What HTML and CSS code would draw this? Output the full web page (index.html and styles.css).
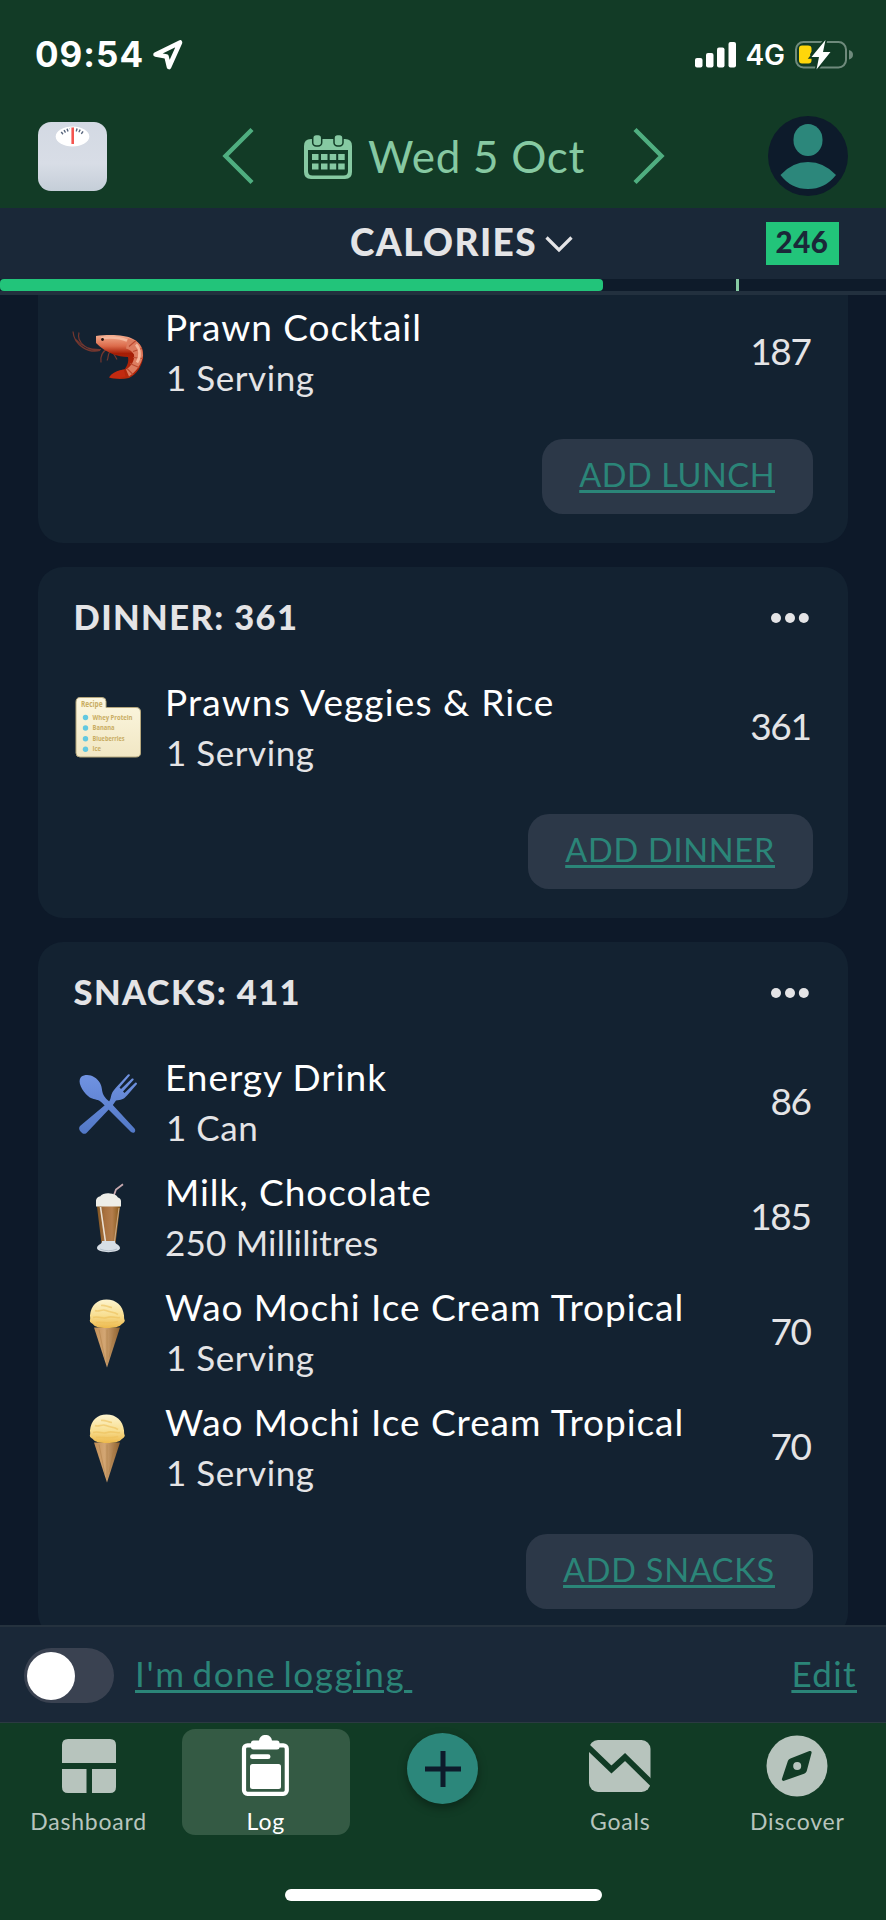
FILE: index.html
```html
<!DOCTYPE html>
<html lang="en">
<head>
<meta charset="utf-8">
<title>Food log</title>
<link rel="stylesheet" href="styles.css">
</head>
<body>
<svg width="0" height="0" class="defs" aria-hidden="true">
  <defs>
    <linearGradient id="scaleBody" x1="0" y1="0" x2="0" y2="1"><stop offset="0" stop-color="#d3d9e3"/><stop offset=".6" stop-color="#d8dde6"/><stop offset="1" stop-color="#c5ced8"/></linearGradient>
    <linearGradient id="paper" x1="0" y1="0" x2="0" y2="1"><stop offset="0" stop-color="#fcf7e0"/><stop offset="1" stop-color="#f1e7c4"/></linearGradient>
    <linearGradient id="steel" gradientUnits="userSpaceOnUse" x1="0" y1="8" x2="0" y2="68"><stop offset="0" stop-color="#7193e2"/><stop offset="1" stop-color="#5278c6"/></linearGradient>
    <linearGradient id="choc" x1="0" y1="0" x2="1" y2="0"><stop offset="0" stop-color="#7d5320"/><stop offset=".35" stop-color="#a9713f"/><stop offset=".65" stop-color="#b47e4c"/><stop offset="1" stop-color="#815414"/></linearGradient>
    <linearGradient id="wafer" x1="0" y1="0" x2="1" y2="0"><stop offset="0" stop-color="#c39058"/><stop offset=".4" stop-color="#d3a673"/><stop offset="1" stop-color="#8e6130"/></linearGradient>
    <linearGradient id="scoop" x1="0" y1="0" x2="0" y2="1"><stop offset="0" stop-color="#fdf4cf"/><stop offset=".55" stop-color="#f8df92"/><stop offset="1" stop-color="#edb94c"/></linearGradient>
    <linearGradient id="shell" x1="0" y1="0" x2="0" y2="1"><stop offset="0" stop-color="#f3ad8f"/><stop offset=".25" stop-color="#dc6b4b"/><stop offset=".42" stop-color="#a51e06"/><stop offset="1" stop-color="#b52a0c"/></linearGradient>
    <symbol id="cone" viewBox="1 -1.500 72 72">
      <path d="M23 30 49 30 36 70Z" fill="url(#wafer)"/>
      <path d="M28 32l6 30M36 32v34M44 32l-6 28" stroke="#a87841" stroke-width=".7" opacity=".6"/>
      <path d="M19 18C20 8 26 2 35.500 2S52 8 53 18c.2 1.600-.2 3 .8 5-.2 2-2 3-3 3.500-2 3-8 4-15 4s-12-1-14-4c-1.500-.8-3-1.800-3-3.500.8-2 .200-3 .200-5Z" fill="url(#scoop)"/>
      <path d="M24 13c4 2 7-2 11 0s8 1 12 4M22 20c6-2 9 2 14 0s9 1 13 0M25 25c6-1 11 2 22-1M30 8c4-1 7 2 11 2" fill="none" stroke="#edc05a" stroke-width="1.600" opacity=".6"/>
    </symbol>
  </defs>
</svg>
<div class="app">
  <header class="header">
    <div class="status">
      <span class="clock">09:54</span>
      <svg class="locate" width="32" height="32" viewBox="0 0 32 32"><path d="M3.500 15.500 28 3.500 17 28 14.500 17.500Z" fill="none" stroke="#fff" stroke-width="4.600" stroke-linejoin="round"/></svg>
      <svg class="signal" width="42" height="26" viewBox="0 0 42 26" fill="#fff"><rect x="0" y="16" width="7.500" height="9.500" rx="2"/><rect x="11" y="11" width="7.500" height="14.500" rx="2"/><rect x="22" y="5.500" width="7.500" height="20" rx="2"/><rect x="33.500" y="0" width="7.500" height="25.500" rx="2"/></svg>
      <span class="network">4G</span>
      <svg class="battery" width="60" height="30" viewBox="0 0 60 30">
        <rect x="2" y="2" width="50" height="25.500" rx="7.500" fill="none" stroke="#6f8a7c" stroke-width="2"/>
        <path d="M55 10q4 1 4 4.700t-4 4.700Z" fill="#6f8a7c"/>
        <path d="M8 5.500h6q3.500 0 3.500 3v3l-1.500 3 1.500 3v3q0 3-3 3H8q-3 0-3-3V8.500q0-3 3-3Z" fill="#ffd60a"/>
        <path d="M31.500 0 17.500 17H25L22.500 29.500 36.500 12H29Z" fill="#fff" stroke="#123b26" stroke-width="3.500" paint-order="stroke"/>
      </svg>
    </div>
    <div class="toolbar">
      <svg class="scale" width="69" height="69" viewBox="0 0 69 69">
        <rect width="69" height="69" rx="13" fill="url(#scaleBody)"/>
        <ellipse cx="34.500" cy="14.500" rx="16.800" ry="10" fill="#fff"/>
        <path d="M23.500 11.500Q34.500 3 45.500 11.500" fill="none" stroke="#57657c" stroke-width="3" stroke-dasharray="1.400 1.700"/>
        <path d="M34.500 5.500V22" stroke="#fff" stroke-width="5"/>
        <path d="M34.700 5.500V22" stroke="#f4544f" stroke-width="2.600"/>
      </svg>
      <div class="datenav">
        <svg width="32" height="58" viewBox="0 0 32 58"><path d="M30 2.500 3.500 29 30 55.500" fill="none" stroke="#4fae80" stroke-width="4.400"/></svg>
        <div class="date">
          <svg width="48" height="46" viewBox="0 0 48 46">
            <path d="M7 5h34q7 0 7 7v26q0 7-7 7H7q-7 0-7-7V12q0-7 7-7ZM4 16v21q0 4.500 4.500 4.500h31q4.500 0 4.500-4.500V16Z" fill="#86c9a2" fill-rule="evenodd"/>
            <g fill="#86c9a2" stroke="#123b26" stroke-width="1.500"><rect x="8.700" y=".5" width="9" height="11.500" rx="3.500"/><rect x="30" y=".5" width="9" height="11.500" rx="3.500"/></g>
            <path d="M8 20h6.500v6H8zM17 20h6.500v6H17zM25.700 20h6.500v6h-6.500zM34.200 20h6.500v6h-6.500zM8 29.500h6.500v6H8zM17 29.500h6.500v6H17zM25.700 29.500h6.500v6h-6.500zM34.200 29.500h6.500v6h-6.500z" fill="#86c9a2"/>
          </svg>
          <span class="date-label">Wed 5 Oct</span>
        </div>
        <svg width="32" height="58" viewBox="0 0 32 58"><path d="M2 2.500 28.500 29 2 55.500" fill="none" stroke="#4fae80" stroke-width="4.400"/></svg>
      </div>
      <svg class="avatar" width="80" height="80" viewBox="0 0 80 80"><circle cx="40" cy="40" r="40" fill="#0d1b2b"/><rect x="25.500" y="8" width="29" height="32" rx="14.500" ry="15.500" fill="#2c877b"/><path d="M12.500 59Q24 46 40 46T68 59Q57 73 40 73T12.500 59Z" fill="#2c877b"/></svg>
    </div>
  </header>

  <section class="summary">
    <div class="metric">CALORIES<svg width="28" height="18" viewBox="0 0 28 18"><path d="M1.500 2.500 14 15 26.500 2.500" fill="none" stroke="#e4e4e6" stroke-width="3.200"/></svg></div>
    <div class="badge">246</div>
  </section>
  <div class="progress"><div class="progress-fill"></div><div class="progress-mark"></div></div>

  <main class="content">
    <section class="card card-lunch">
      <div class="item">
        <svg class="food" viewBox="0 9.500 72 72">
          <path d="M1 25c1 14 16 22 27 19M7 26c-3 10 10 20 22 17M4 33c6 8 14 10 24 10M36 42c-6 3-8 7-7 14M38 45c-3 4-1 6-3 9M41 46l4 7" fill="none" stroke="#74372f" stroke-width="1.200"/>
          <path d="M24 29.500c12-1.500 29-1.500 37 3 8 4 11 10 10 19-1 8-7 17-14 20-6 1-13 1.500-18-.5 2-4 8-7.500 14-8.500 2-3 4-7 3-12-10 0-22-4-32-14Z" fill="url(#shell)"/>
          <path d="M56 32c11 2 15 9 15 17-1 9-8 17-14 21l-3-7c5-3 9-9 8-15-2-3-4-5-8-6z" fill="#dd7d60"/>
          <path d="M57 40l7-6M61 45l9-3M61 51l10 1M58 57l9 4M55 62l6 6" stroke="#bb4a30" stroke-width="1.100"/>
          <path d="M29 31.500c9-1 18-1 26 2.500M64 38c4 4 5 12 1 18" fill="none" stroke="#f5b79c" stroke-width="2.600"/>
          <path d="M37 71c3-5 9-7.500 15-7.500l1.500 6.500c-6 2-12 2.500-16.500 1Z" fill="#c22a10"/>
          <circle cx="30.500" cy="33" r="1.400" fill="#26110d"/>
        </svg>
        <div class="item-text"><div class="name">Prawn Cocktail</div><div class="portion">1 Serving</div></div>
        <div class="value">187</div>
      </div>
      <div class="actions"><a class="add add-lunch">ADD LUNCH</a></div>
    </section>

    <section class="card">
      <div class="card-head"><h2 class="title">DINNER: 361</h2><svg class="more" width="38" height="10" viewBox="0 0 38 10" fill="#e4e4e6"><circle cx="5" cy="5" r="5"/><circle cx="19" cy="5" r="5"/><circle cx="32.800" cy="5" r="5"/></svg></div>
      <div class="item">
        <svg class="food" viewBox="0 0 72 72">
          <path d="M8 6.500h22q4 0 4 4v6h30q4.500 0 4.500 4.500v41q0 4-4.500 4H8q-4 0-4-4v-51q0-4.500 4-4.500Z" fill="url(#paper)" stroke="#b5a77d"/>
          <g fill="#62c8e0"><circle cx="13.500" cy="26.500" r="2.700"/><circle cx="13.500" cy="37" r="2.700"/><circle cx="13.500" cy="47.700" r="2.700"/><circle cx="13.500" cy="58.300" r="2.700"/></g>
          <g class="recipe"><text x="9" y="16" textLength="21.500" lengthAdjust="spacingAndGlyphs" class="recipe-head">Recipe</text><text x="20.500" y="28.500" textLength="40" lengthAdjust="spacingAndGlyphs">Whey Protein</text><text x="20.500" y="39" textLength="22" lengthAdjust="spacingAndGlyphs">Banana</text><text x="20.500" y="49.700" textLength="32" lengthAdjust="spacingAndGlyphs">Blueberries</text><text x="20.500" y="60.300" textLength="8.500" lengthAdjust="spacingAndGlyphs">Ice</text></g>
        </svg>
        <div class="item-text"><div class="name name-wide">Prawns Veggies &amp; Rice</div><div class="portion">1 Serving</div></div>
        <div class="value">361</div>
      </div>
      <div class="actions"><a class="add">ADD DINNER</a></div>
    </section>

    <section class="card">
      <div class="card-head"><h2 class="title">SNACKS: 411</h2><svg class="more" width="38" height="10" viewBox="0 0 38 10" fill="#e4e4e6"><circle cx="5" cy="5" r="5"/><circle cx="19" cy="5" r="5"/><circle cx="32.800" cy="5" r="5"/></svg></div>
      <div class="item">
        <svg class="food" viewBox="0 0 72 72" fill="url(#steel)">
          <path d="M9 11c6-4.500 15-1 19 6 2.500 4.500 1.500 8 3.500 12 1 2.500 4 5 6.500 7L62.500 62.500c2 3-.5 5.500-3.500 3.500L35 42c-3-3-5-6-8-7.500-3.500-1.500-7-1-11-4.500-6-5-11-14.500-7-19Z"/>
          <path d="M56 8.500q1.500-.8 2 .8L47.500 21.500 49 23 60 12.500q1.700-.5 1.700 1.200L51 25.500l1.500 1.500 11-10.500q1.800-.2 1.500 1.500L55 29.500c-3.500 4-6 4.500-11 5L40.500 39.500 14.500 67c-2 1.500-3.500 1-5.500-1s-2.500-4-1-6L35.500 37c3-2 3-5 4-8.500 1-3.500 3-5 5-7.500Z"/>
        </svg>
        <div class="item-text"><div class="name">Energy Drink</div><div class="portion">1 Can</div></div>
        <div class="value">86</div>
      </div>
      <div class="item">
        <svg class="food" viewBox="0 0 72 72">
          <path d="M42 14 44 8.500 51 3.200" fill="none" stroke="#c8aab0" stroke-width="1.800"/>
          <path d="M24.500 22h24L43.500 62h-14Z" fill="url(#choc)"/>
          <path d="M24 25.500h25V20c0-2-1.500-3-3-3.500-2-3-5-4-8-4-3-.8-8 .2-10 3-2.500 0-4 2.500-4 4.500Z" fill="#eeeee8"/>
          <path d="M28.500 26l5 35" fill="none" stroke="#eadfd2" stroke-width="1.600"/><path d="M47 27l-4.500 33" fill="none" stroke="#c9a987" stroke-width="1"/>
          <path d="M30 60h13c-.5 3 5 3.500 5 7 0 5.500-23 5.500-23 0 0-3.500 5.500-4 5-7Z" fill="#d7dee5"/>
          <path d="M28 68q8.500 3.500 17 0" stroke="#b3bfca" fill="none"/>
        </svg>
        <div class="item-text"><div class="name">Milk, Chocolate</div><div class="portion portion-tight">250 Millilitres</div></div>
        <div class="value">185</div>
      </div>
      <div class="item">
        <svg class="food"><use href="#cone"/></svg>
        <div class="item-text"><div class="name">Wao Mochi Ice Cream Tropical</div><div class="portion">1 Serving</div></div>
        <div class="value">70</div>
      </div>
      <div class="item">
        <svg class="food"><use href="#cone"/></svg>
        <div class="item-text"><div class="name">Wao Mochi Ice Cream Tropical</div><div class="portion">1 Serving</div></div>
        <div class="value">70</div>
      </div>
      <div class="actions"><a class="add">ADD SNACKS</a></div>
    </section>
  </main>

  <section class="done">
    <div class="toggle"><div class="knob"></div></div>
    <a class="link link-done">I'm done logging&nbsp;</a>
    <a class="link link-edit">Edit</a>
  </section>

  <nav class="nav">
    <div class="tabs">
      <div class="tab">
        <svg width="62" height="62" viewBox="0 0 62 62" fill="#b7c4bd"><path d="M10 4h42q6 0 6 6v18H4V10q0-6 6-6ZM4 34h24.500v24H10q-6 0-6-6ZM34 34h24v18q0 6-6 6H34Z"/></svg>
        <span>Dashboard</span>
      </div>
      <div class="tab tab-active">
        <svg width="62" height="62" viewBox="0 0 62 62" fill="#fff"><rect x="9" y="10.300" width="42.800" height="48.500" rx="3.500" fill="none" stroke="#fff" stroke-width="4.200"/><path d="M16 8q0-2.500 2.500-2.500h5.500C25-2 36-2 37 5.500h5q2.500 0 2.500 2.500v4q0 2.500-2.500 2.500H18.500q-2.500 0-2.500-2.500Z"/><rect x="15" y="19.300" width="20.500" height="4.800" rx="2.400"/><rect x="15" y="29" width="31" height="25" rx="2.500"/></svg>
        <span>Log</span>
      </div>
      <div class="tab-add"><div class="plus"><svg width="36" height="36" viewBox="0 0 36 36"><path d="M18 0v36M0 18h36" stroke="#0d1b2b" stroke-width="5"/></svg></div></div>
      <div class="tab">
        <svg width="62" height="62" viewBox="0 0 62 62"><rect x="0" y="5" width="61.500" height="52" rx="9" fill="#b7c4bd"/><path d="M-2 11 22.500 34.500 36 22 64 49.500" fill="none" stroke="#113b25" stroke-width="5.800"/></svg>
        <span>Goals</span>
      </div>
      <div class="tab">
        <svg width="62" height="62" viewBox="0 0 62 62"><circle cx="31" cy="31" r="30.500" fill="#b7c4bd"/><path d="M44 17.500 25 25Q23.800 25.500 23.300 26.700L17.500 44.300 37.500 37.300Q38.700 36.800 39.200 35.600Z" fill="#113b25" stroke="#113b25" stroke-width="3.200" stroke-linejoin="round"/><circle cx="31.200" cy="31" r="4" fill="#b7c4bd"/></svg>
        <span>Discover</span>
      </div>
    </div>
    <div class="home"></div>
  </nav>
</div>
</body>
</html>
```
FILE: styles.css
```css
* { box-sizing: border-box; }
body { margin: 0; background: #0d1929; font-family: Lato, sans-serif; color: #e4e4e6; }
svg { display: block; flex: none; }
.defs { position: absolute; }
.app { width: 886px; height: 1920px; display: flex; flex-direction: column; overflow: hidden; white-space: nowrap; }

/* Status bar and date toolbar */
.header { height: 208px; flex: none; background: #123b26; }
.status { height: 104px; display: flex; align-items: flex-start; padding: 39px 33px 0 35px; color: #fff; font-family: Inter, sans-serif; }
.clock { font-size: 35px; font-weight: 700; line-height: 31px; letter-spacing: 1px; }
.locate { margin-left: 8px; }
.signal { margin: 2.500px 0 0 auto; }
.network { font-size: 28px; font-weight: 600; line-height: 33px; margin-left: 8px; }
.battery { margin: 1px -1px 0 9px; }
.toolbar { height: 104px; display: flex; align-items: center; padding: 0 38px; }
.scale { margin-top: 1px; }
.datenav { display: flex; align-items: center; margin: -1px auto 0 115px; }
.date { display: flex; align-items: center; gap: 16px; margin: 3px 48px 0 50px; }
.date-label { font-size: 44px; line-height: 50px; letter-spacing: .7px; color: #86c9a2; margin-top: -3px; }

/* Calories summary */
.summary { height: 71px; flex: none; background: #1a2838; display: flex; align-items: center; padding: 0 47.500px 0 350px; }
.metric { display: flex; align-items: center; gap: 8.500px; font-size: 37px; line-height: 50px; font-weight: 900; letter-spacing: 1.400px; margin-top: -3px; }
.metric svg { margin-top: 3px; }
.badge { margin-left: auto; width: 73px; height: 43px; background: #22c47a; color: #1a2838; font-size: 29.500px; line-height: 40px; font-weight: 900; letter-spacing: .5px; text-align: center; }
.progress { position: relative; height: 16px; flex: none; background: #0e1b2a; border-bottom: 4px solid #22303e; }
.progress-fill { width: 603px; height: 12px; background: #22c47a; border-radius: 4px; }
.progress-mark { position: absolute; left: 735.500px; top: 0; width: 3px; height: 12px; background: #86c9a2; }

/* Meal cards */
.content { height: 1330px; flex: none; overflow: hidden; padding: 0 38px; display: flex; flex-direction: column; gap: 24px; }
.card { flex: none; background: #132231; border-radius: 25px; padding: 0 35.500px 28.500px 34px; }
.card-lunch { margin-top: -1px; border-radius: 0 0 25px 25px; }
.card-head { height: 102.500px; display: flex; justify-content: space-between; align-items: flex-start; padding: 24px 3.500px 0 1.500px; }
.title { margin: 0; font-size: 34.500px; line-height: 51px; font-weight: 900; letter-spacing: 1.400px; }
.more { margin-top: 22px; }
.item { height: 115px; display: flex; align-items: center; padding-right: 2px; }
.food { width: 72px; height: 72px; margin-right: 21px; }
.item-text { padding-top: 1px; }
.name { font-size: 37px; line-height: 50px; letter-spacing: .95px; color: #fff; }
.name-wide { letter-spacing: 1.120px; }
.portion { font-size: 35px; line-height: 50px; letter-spacing: .55px; padding-left: 1px; }
.portion-tight { letter-spacing: .2px; padding-left: 0; }
.value { margin: -2px 0 0 auto; font-size: 37px; line-height: 50px; letter-spacing: -1.400px; }
.recipe { font-family: "Open Sans", sans-serif; font-weight: 700; font-size: 7px; fill: #c9ad63; }
.recipe-head { font-size: 8px; }
.actions { display: flex; justify-content: flex-end; margin-top: 29.500px; }
.add { height: 75.500px; padding: 0 37.500px; border-radius: 21px; background: #2c3848; color: #2b8578; font-size: 32.500px; line-height: 72px; letter-spacing: .75px; text-decoration: underline; text-decoration-thickness: 2.500px; text-underline-offset: 3px; }
.add-lunch { letter-spacing: .55px; }

/* Done logging bar */
.done { height: 98px; flex: none; display: flex; align-items: center; background: #1a2838; border-top: 2px solid #25323e; border-bottom: 1px solid #2b3a42; padding: 0 29px 0 24px; }
.toggle { width: 90px; height: 55px; border-radius: 28px; background: #3a4251; padding: 3.500px 3px; margin: 2px 21px 0 0; }
.knob { width: 48px; height: 48px; border-radius: 50%; background: #fff; }
.link { font-size: 35px; line-height: 50px; letter-spacing: 1.400px; margin-top: -3px; color: #2b8578; text-decoration: underline; text-decoration-thickness: 2.500px; text-underline-offset: 3px; }
.link-done { word-spacing: -3.500px; letter-spacing: 1.600px; }
.link-edit { margin-left: auto; }

/* Tab bar */
.nav { flex: 1; background: #113b25; padding-top: 6px; display: flex; flex-direction: column; align-items: center; }
.tabs { width: 886px; height: 106px; display: grid; grid-template-columns: repeat(5, 1fr); justify-items: center; }
.tab { width: 168px; height: 106px; border-radius: 13px; padding-top: 6px; display: flex; flex-direction: column; align-items: center; font-size: 23px; line-height: 30px; letter-spacing: .8px; color: #b7c4bd; }
.tab span { margin-top: 9px; }
.tab-active { background: #345a44; color: #fff; }
.plus { width: 71px; height: 71px; margin-top: 4px; border-radius: 50%; background: #2c877b; display: flex; align-items: center; justify-content: center; box-shadow: 0 4px 10px rgba(0, 0, 0, .35); }
.home { width: 317px; height: 12px; border-radius: 6px; background: #fff; margin-top: 54px; }
```
